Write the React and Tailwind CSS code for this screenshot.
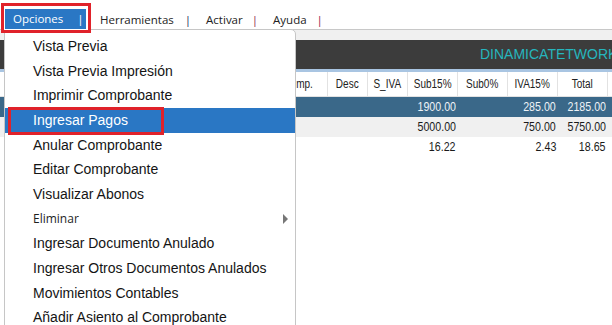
import React from 'react';

const menuItems = [
  'Vista Previa',
  'Vista Previa Impresión',
  'Imprimir Comprobante',
  'Ingresar Pagos',
  'Anular Comprobante',
  'Editar Comprobante',
  'Visualizar Abonos',
  'Eliminar',
  'Ingresar Documento Anulado',
  'Ingresar Otros Documentos Anulados',
  'Movimientos Contables',
  'Añadir Asiento al Comprobante',
];

const rows = [
  { sub15: '1900.00', iva: '285.00', total: '2185.00', cls: 'bg-[#3a6889] text-[#eef3f7]' },
  { sub15: '5000.00', iva: '750.00', total: '5750.00', cls: 'bg-[#f0f0f0] text-[#1a1a1a]' },
  { sub15: '16.22', iva: '2.43', total: '18.65', cls: 'bg-white text-[#1a1a1a]' },
];

function HeaderCell({ w, children }) {
  return (
    <div className={`${w} h-full flex items-center justify-center border-r border-[#e2e2e2] whitespace-nowrap`}>
      <span className="inline-block scale-x-[0.8] origin-center">{children}</span>
    </div>
  );
}

function Num({ children }) {
  return (
    <div className="w-[50px] flex justify-end pr-[2px] whitespace-nowrap">
      <span className="inline-block scale-x-[0.82] origin-right">{children}</span>
    </div>
  );
}

function OptionsMenu() {
  return (
    <div className="absolute top-[29px] left-[4px] w-[292px] h-[310px] bg-white border border-[#c6c6c6] rounded-tr-[5px] z-10 pt-[4px]">
      {menuItems.map((item) => {
        if (item === 'Ingresar Pagos') {
          return (
            <div key={item} className="relative h-[24.7px] flex items-center pl-[28px] bg-[#2a77c4] text-white text-[14px] font-['Liberation_Sans',sans-serif]">
              {item}
              <div className="absolute left-[3px] -top-[1px] w-[156px] h-[28px] border-[3px] border-[#e0222a]" />
            </div>
          );
        }
        if (item === 'Eliminar') {
          return (
            <div key={item} className="h-[24.7px] flex items-center justify-between pl-[28px] pr-[7px] text-[#1e1e1e] text-[12px] font-['Open_Sans',sans-serif]">
              {item}
              <span className="w-0 h-0 border-y-[5px] border-y-transparent border-l-[5px] border-l-[#777]" />
            </div>
          );
        }
        return (
          <div key={item} className="h-[24.7px] flex items-center pl-[28px] text-[#141414] text-[14px] font-['Liberation_Sans',sans-serif]">
            {item}
          </div>
        );
      })}
    </div>
  );
}

export default function App() {
  return (
    <div className="relative w-[612px] h-[325px] overflow-hidden bg-white font-['Open_Sans',sans-serif]">
      {/* top navigation */}
      <div className="h-[29px] flex items-start text-[11.5px] text-[#222]">
        <div className="relative z-20 ml-[1px] mt-[3px] w-[90px] h-[30px] border-[3px] border-[#e0222a] bg-white">
          <div className="ml-[1px] mt-[3px] w-[81px] h-[20px] bg-[#2a77c4] text-white flex items-center pl-[8px]">
            <span>Opciones</span>
            <span className="ml-[14px]">|</span>
          </div>
        </div>
        <div className="flex items-center h-[29px] pt-[10px] ml-[9px]">
          <span>Herramientas</span>
          <span className="ml-[11px] text-[#1c2a55]">|</span>
          <span className="ml-[15px]">Activar</span>
          <span className="ml-[9px] text-[#8e2348]">|</span>
          <span className="ml-[15px]">Ayuda</span>
          <span className="ml-[10px] text-[#8e2348]">|</span>
        </div>
      </div>

      {/* page content */}
      <div className="border-t border-[#c8c8c8]">
        <div className="h-[10px] bg-[#f0f0f0]" />
        <div className="h-[29px] bg-[#3c3c3c] flex items-center pl-[480px] text-[14px] text-[#26b6be] font-['Liberation_Sans',sans-serif] whitespace-nowrap overflow-hidden">
          DINAMICATETWORK
        </div>
        <div className="h-[3px] bg-[#a9c5e2]" />
        <div className="font-['Liberation_Sans',sans-serif]">
          <div className="h-[25px] flex text-[12.5px] text-[#222] bg-white border-b border-[#e2e2e2]">
            <div className="w-[280px] h-full border-r border-[#e2e2e2]" />
            <HeaderCell w="w-[48px]">Imp.</HeaderCell>
            <HeaderCell w="w-[40px]">Desc</HeaderCell>
            <HeaderCell w="w-[40px]">S_IVA</HeaderCell>
            <HeaderCell w="w-[50px]">Sub15%</HeaderCell>
            <HeaderCell w="w-[50px]">Sub0%</HeaderCell>
            <HeaderCell w="w-[50px]">IVA15%</HeaderCell>
            <HeaderCell w="w-[50px]">Total</HeaderCell>
            <div className="flex-1" />
          </div>
          {rows.map((r, i) => (
            <div key={i} className={`h-[20px] flex items-center text-[13px] ${r.cls}`}>
              <div className="w-[408px]" />
              <Num>{r.sub15}</Num>
              <div className="w-[50px]" />
              <Num>{r.iva}</Num>
              <Num>{r.total}</Num>
              <div className="flex-1" />
            </div>
          ))}
        </div>
      </div>

      <OptionsMenu />
    </div>
  );
}
